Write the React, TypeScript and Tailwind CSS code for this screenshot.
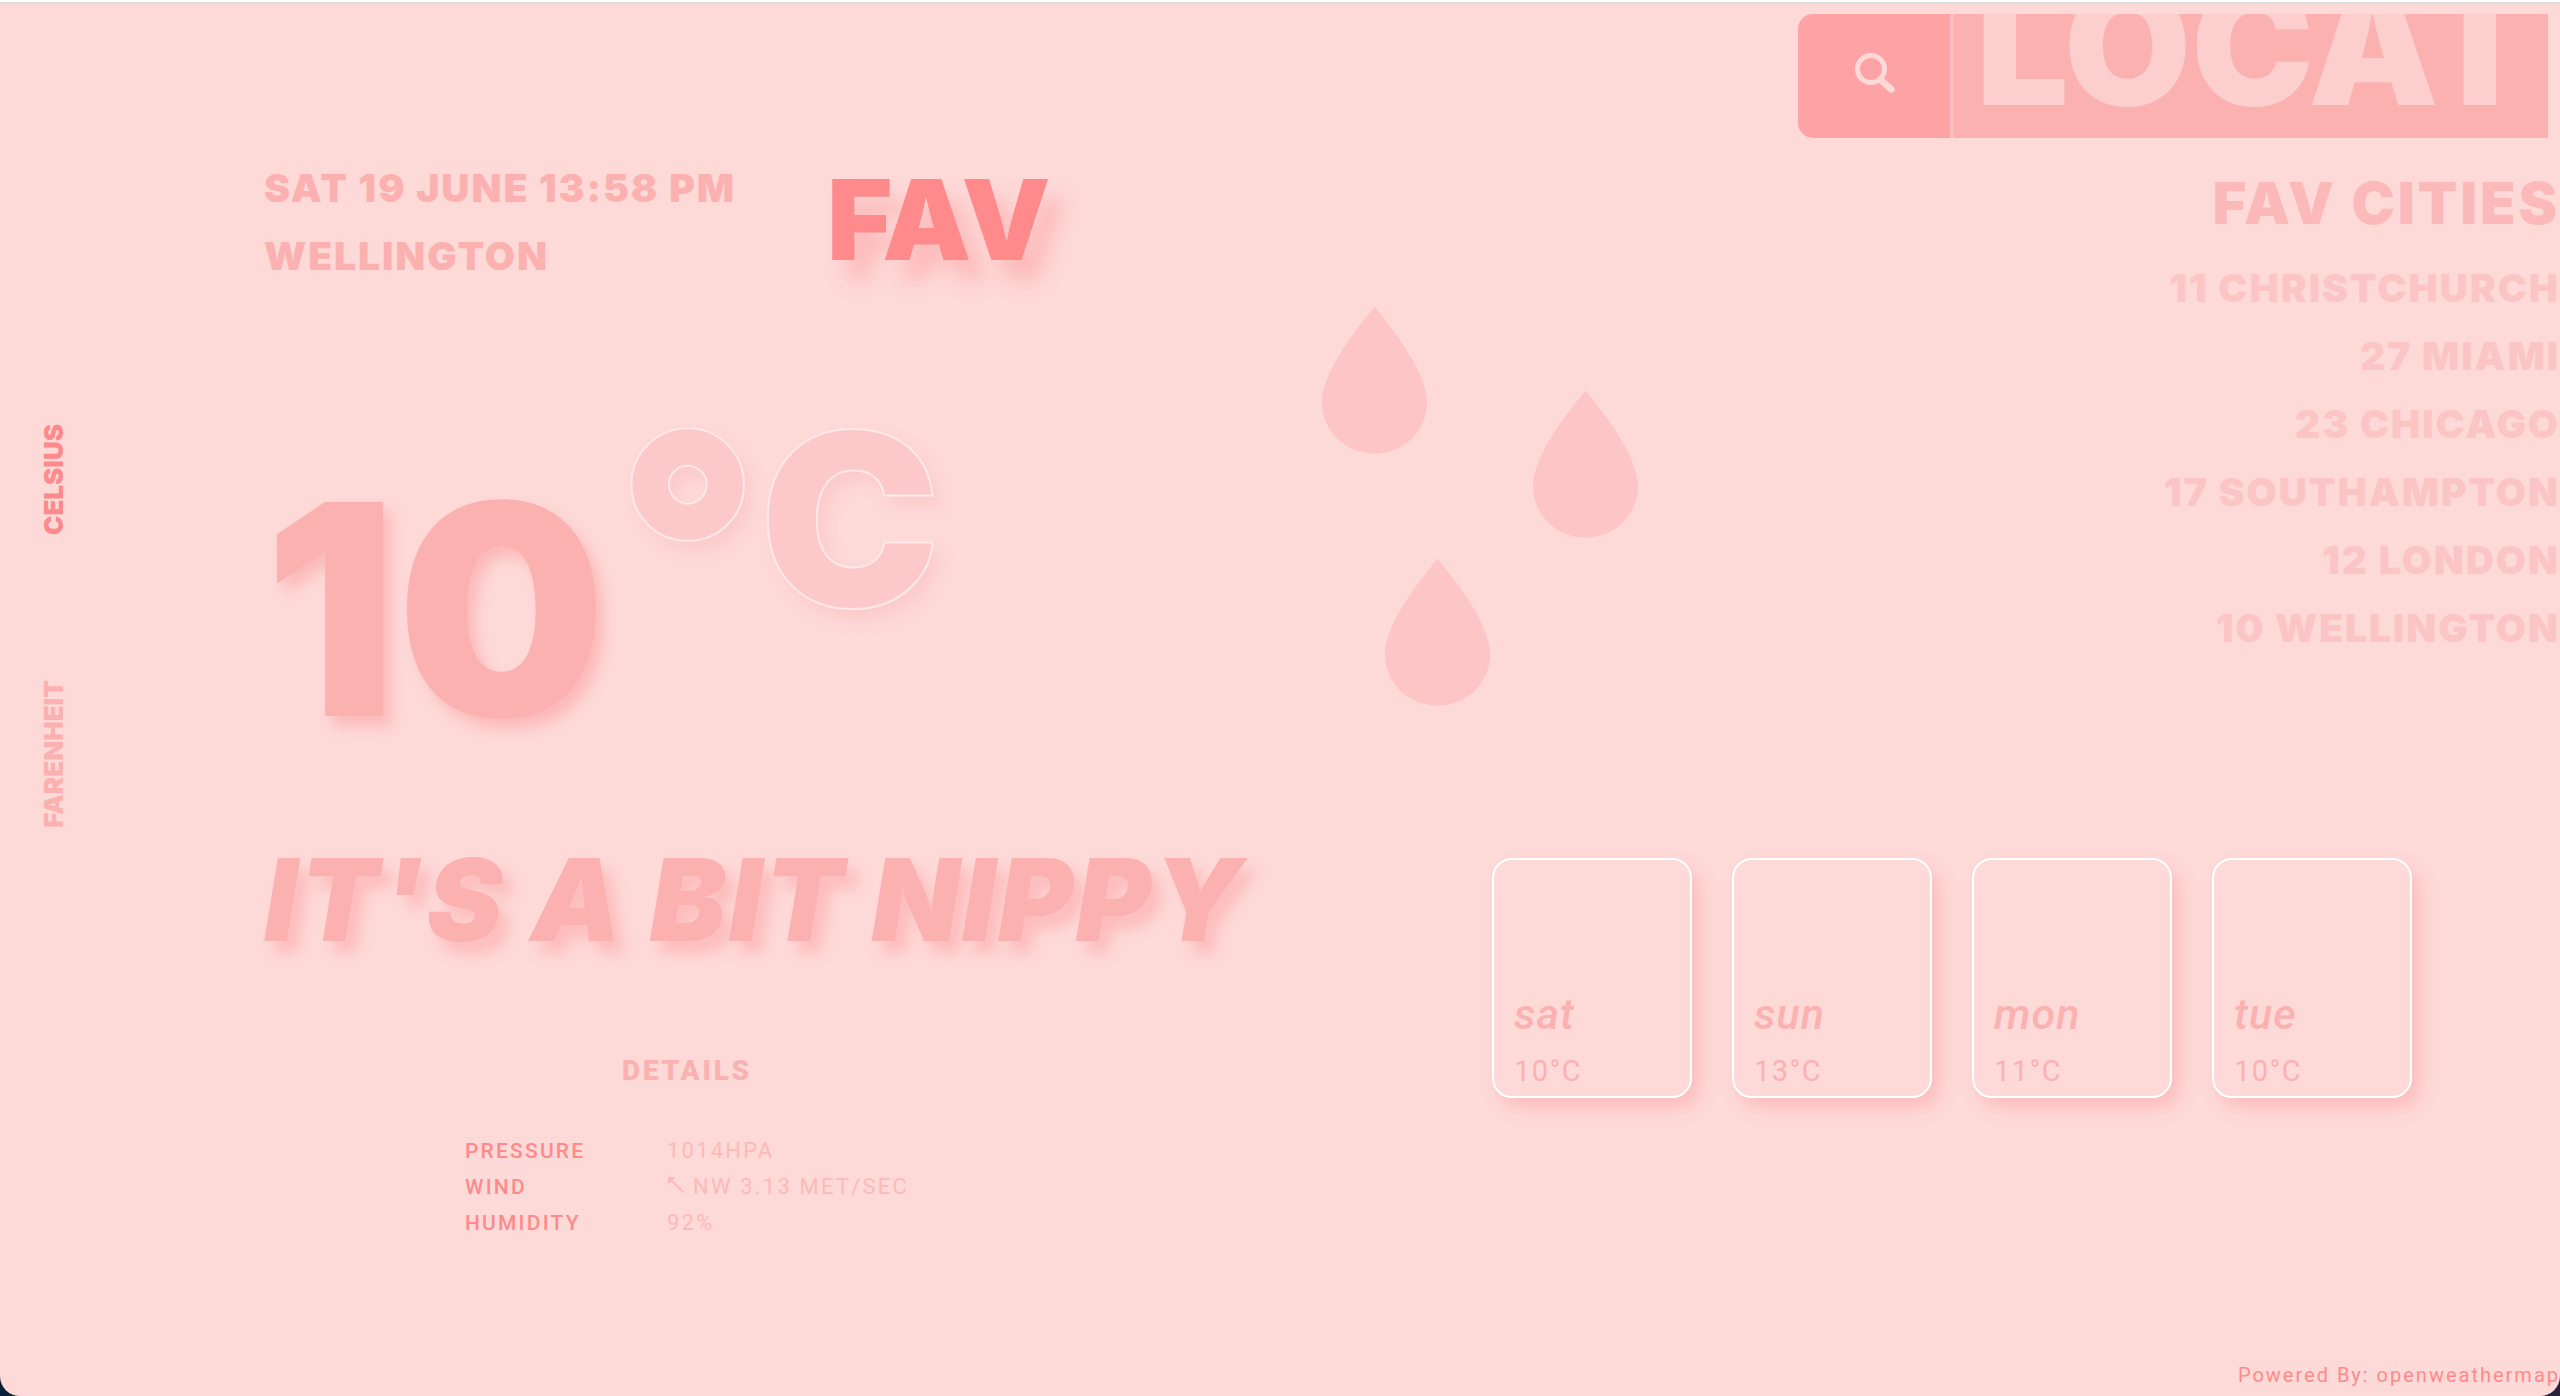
import React from "react";

const cities = [
  { temp: 11, name: "Christchurch" },
  { temp: 27, name: "Miami" },
  { temp: 23, name: "Chicago" },
  { temp: 17, name: "Southampton" },
  { temp: 12, name: "London" },
  { temp: 10, name: "Wellington" },
];

const forecast = [
  { day: "sat", temp: "10°C" },
  { day: "sun", temp: "13°C" },
  { day: "mon", temp: "11°C" },
  { day: "tue", temp: "10°C" },
];

const details = [
  { label: "Pressure", value: "1014hPa" },
  { label: "Wind", value: "NW 3.13 met/sec", arrow: true },
  { label: "Humidity", value: "92%" },
];

function UnitSwitch() {
  return (
    <aside className="w-[264px] shrink-0 pt-[420px] pl-[39px]">
      <div className="flex w-[30px] flex-col items-center gap-[145px] text-[26px] leading-[30px] font-black uppercase">
        <button className="rotate-180 text-[#fe8a8b] uppercase [writing-mode:vertical-rl]">Celsius</button>
        <button className="rotate-180 text-[#fcb1b1] uppercase [writing-mode:vertical-rl]">Farenheit</button>
      </div>
    </aside>
  );
}

function SearchBar() {
  return (
    <form className="mt-[10px] mr-3 flex h-[124px] w-[750px] overflow-hidden rounded-l-[15px]" onSubmit={(e) => e.preventDefault()}>
      <button aria-label="Search" className="flex w-[152px] shrink-0 items-center justify-center bg-[#fea3a5] pb-1.5 pl-0.5">
        <svg width="42" height="42" viewBox="0 0 42 42" fill="none" className="text-[#fdd9d8]" aria-hidden="true">
          <circle cx="17" cy="17" r="13.5" stroke="currentColor" strokeWidth="5" />
          <path d="M26 27.5 37.5 37.5" stroke="currentColor" strokeWidth="6.5" strokeLinejoin="round" />
          <path d="M35 35.5 37.5 37.5" stroke="currentColor" strokeWidth="6.5" strokeLinecap="round" />
        </svg>
      </button>
      <div className="flex min-w-0 flex-1 items-end overflow-hidden border-l-4 border-[#fdbebd] bg-[#fcb1b1]">
        <input
          aria-label="Location"
          placeholder="LOCATION"
          className="mr-6 ml-[22px] h-[184px] min-w-0 flex-1 bg-transparent text-[164px] leading-[184px] font-black text-[#fccfce] outline-none placeholder:text-[#fccfce]"
        />
      </div>
    </form>
  );
}

function FavCities() {
  return (
    <section className="mt-[26px] text-right uppercase">
      <h2 className="text-[58px] leading-[78px] font-black tracking-wider text-[#fcb9b9]">Fav Cities</h2>
      <ul className="mt-3 text-[39px] leading-[68px] font-black tracking-wider text-[#fcc5c5]">
        {cities.map((c) => (
          <li key={c.name}>
            {c.temp} {c.name}
          </li>
        ))}
      </ul>
    </section>
  );
}

function Rain() {
  const drop = "M52.5 0C67 17 105 64 105 95A52.5 51 0 0 1 52.5 146.5A52.5 51 0 0 1 0 95C0 64 38 17 52.5 0Z";
  return (
    <svg width="316" height="400" viewBox="0 0 316 400" fill="#fdc5c5" className="mt-[303px] shrink-0" role="img" aria-label="Rain">
      <path d={drop} />
      <path d={drop} transform="translate(211 84)" />
      <path d={drop} transform="translate(63 252)" />
    </svg>
  );
}

function Current() {
  return (
    <section className="w-[1058px] shrink-0 text-[#fcb1b1]">
      <div className="flex items-start pt-[150px]">
        <div className="w-[563px] text-[39px] leading-[68px] font-black tracking-wider uppercase">
          <p>Sat 19 June 13:58 PM</p>
          <p>Wellington</p>
        </div>
        <button className="mt-[9px] text-[112px] leading-none font-black text-[#fe8a8b] [text-shadow:16px_20px_20px_#fdb9b9]">
          FAV
        </button>
      </div>
      <div className="mt-[98px] flex items-start font-black">
        <span className="mt-[74px] text-[294px] leading-none [text-shadow:8px_10px_14px_#fcb9b9]">10</span>
        <div className="ml-2.5 flex items-start leading-none text-[#fdc8c9] [-webkit-text-stroke:2px_#fee8e8] [text-shadow:8px_10px_16px_#fccaca]">
          <span className="text-[310px] leading-none">°</span>
          <span className="mt-[10px] text-[242px] leading-none">C</span>
        </div>
      </div>
    </section>
  );
}

function Details() {
  return (
    <section className="mt-24 w-[846px] uppercase">
      <h3 className="text-center text-[28px] leading-9 font-black tracking-widest text-[#fcb1b1]">Details</h3>
      <table className="mt-11 ml-[200px] text-left text-[22px] leading-9 tracking-widest">
        <tbody>
          {details.map((d) => (
            <tr key={d.label}>
              <th scope="row" className="w-[203px] pl-px text-[21px] font-medium text-[#fe8a8b]">
                {d.label}
              </th>
              <td className="text-[#fcb9b9]">
                {d.arrow && (
                  <svg width="18" height="18" viewBox="0 0 18 18" className="mr-2 inline align-baseline" fill="none" aria-hidden="true">
                    <path d="M4 4 16 16" stroke="currentColor" strokeWidth="2" />
                    <path d="M1 1H9L1 8Z" fill="currentColor" />
                  </svg>
                )}
                {d.value}
              </td>
            </tr>
          ))}
        </tbody>
      </table>
    </section>
  );
}

function Forecast() {
  return (
    <ul className="mt-[15px] flex gap-10 text-[#fcb1b1]">
      {forecast.map((f) => (
        <li
          key={f.day}
          className="flex h-[240px] w-[200px] flex-col justify-end rounded-[20px] border-2 border-white pb-1.5 pl-5 shadow-[8px_10px_16px_#fdbebe]"
        >
          <span className="mb-2 text-[43px] leading-[60px] font-medium tracking-wide italic">{f.day}</span>
          <span className="text-[29px] leading-[38px] tracking-wider">{f.temp}</span>
        </li>
      ))}
    </ul>
  );
}

export default function App() {
  return (
    <div className="flex min-h-screen flex-col overflow-hidden bg-linear-to-r from-[#0b2038] to-[#2a2040] font-['Roboto',sans-serif]">
      <div className="h-1 border-b-2 border-[#dcdcdc] bg-white" />
      <div className="flex flex-1 rounded-b-[20px] bg-[#fdd9d8]">
        <div className="contents font-['Inter',sans-serif]">
          <UnitSwitch />
        </div>
        <main className="flex min-w-0 flex-1 flex-col">
          <div className="flex h-[800px] font-['Inter',sans-serif]">
            <Current />
            <Rain />
            <div className="flex min-w-0 flex-1 flex-col items-end">
              <SearchBar />
              <FavCities />
            </div>
          </div>
          <div className="mt-[39px] flex">
            <div className="w-[1228px] shrink-0">
              <h1 className="font-['Inter',sans-serif] text-[114px] leading-none font-black tracking-wide whitespace-nowrap text-[#fcb1b1] italic [text-shadow:10px_12px_14px_#fdbcbc]">
                IT'S A BIT NIPPY
              </h1>
              <Details />
            </div>
            <Forecast />
          </div>
          <footer className="mt-auto pb-1.5 text-right text-[20px] leading-[30px] tracking-widest text-[#fe8a8b]">
            Powered By: <a href="#openweathermap">openweathermap</a>
          </footer>
        </main>
      </div>
    </div>
  );
}
